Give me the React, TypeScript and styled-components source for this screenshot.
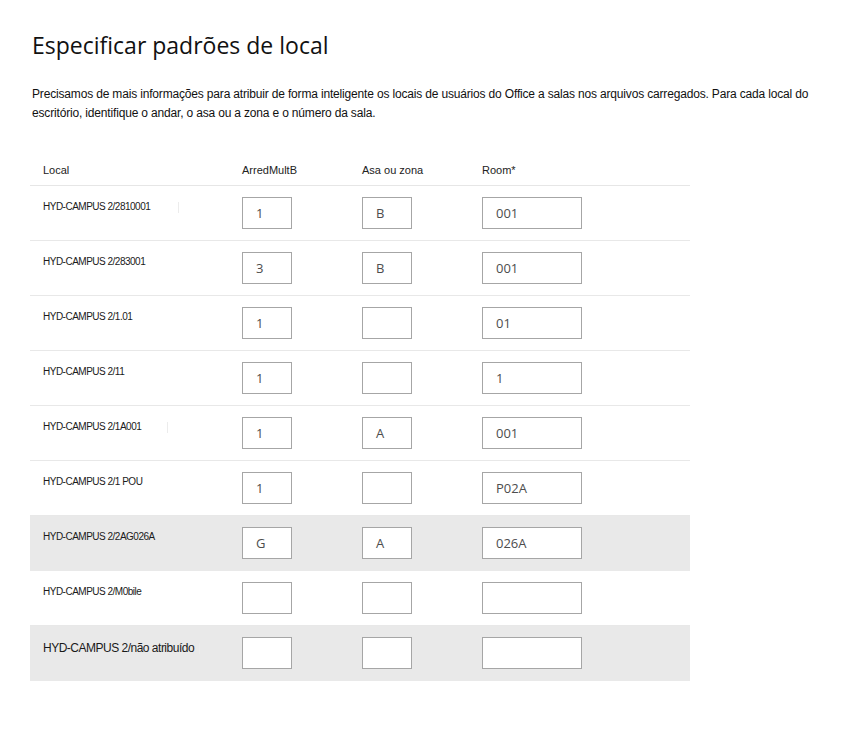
import React from "react";
import styled, { createGlobalStyle } from "styled-components";

const Global = createGlobalStyle`
  html, body { margin: 0; padding: 0; background: #ffffff; }
  body { font-family: "Liberation Sans", Arial, sans-serif; color: #000; }
`;

const Page = styled.main`
  padding: 30px 0 40px 30px;
  width: 815px;
  box-sizing: border-box;
`;

const Title = styled.h1`
  margin: 0 0 0 2px;
  font-family: "Open Sans", "Liberation Sans", sans-serif;
  font-weight: 400;
  font-size: 23px;
  line-height: 30px;
  color: #111;
`;

const Intro = styled.p`
  margin: 25px 0 0 2px;
  font-size: 12px;
  line-height: 19px;
  letter-spacing: -0.17px;
  color: #111;
  white-space: nowrap;
`;

const Table = styled.div`
  margin-top: 32px;
  width: 660px;
  display: flex;
  flex-direction: column;
`;

const Grid = styled.div`
  display: grid;
  grid-template-columns: 212px 120px 120px 1fr;
`;

const HeaderRow = styled(Grid)`
  height: 30px;
  align-items: center;
  border-bottom: 1px solid #e6e6e6;
`;

const HeadCell = styled.div<{ $first?: boolean }>`
  font-size: 11px;
  color: #222;
  padding-left: ${(p) => (p.$first ? "13px" : "0")};
`;

const Row = styled(Grid)<{ $shaded?: boolean }>`
  height: 55px;
  box-sizing: border-box;
  padding-top: 11px;
  align-items: start;
  background: ${(p) => (p.$shaded ? "#e9e9e9" : "#ffffff")};
  border-bottom: 1px solid ${(p) => (p.$shaded ? "#e9e9e9" : "#e8e8e8")};
`;

const Label = styled.div<{ $large?: boolean }>`
  padding-left: 13px;
  display: flex;
  align-items: center;
  white-space: nowrap;
  color: #1a1a1a;
  font-size: ${(p) => (p.$large ? "12px" : "10px")};
  letter-spacing: -0.5px;
  line-height: 14px;
  margin-top: ${(p) => (p.$large ? "4px" : "3px")};
`;

const Caret = styled.span<{ $gap: number }>`
  display: inline-block;
  width: 0;
  height: 11px;
  border-left: 1px solid #ececec;
  margin-left: ${(p) => p.$gap}px;
`;

const Field = styled.div<{ $wide?: boolean }>`
  width: ${(p) => (p.$wide ? "100px" : "50px")};
  height: 32px;
  box-sizing: border-box;
  border: 1px solid #a6a6a6;
  background: #fff;
  padding-left: 13px;
  display: flex;
  align-items: center;
  font-family: "Open Sans", "Liberation Sans", sans-serif;
  font-size: 13px;
  color: #4d4d4d;
`;

type Entry = {
  local: string;
  floor: string;
  wing: string;
  room: string;
  shaded?: boolean;
  large?: boolean;
  caret?: number;
};

const rows: Entry[] = [
  { local: "HYD-CAMPUS 2/2810001", floor: "1", wing: "B", room: "001", caret: 28 },
  { local: "HYD-CAMPUS 2/283001", floor: "3", wing: "B", room: "001" },
  { local: "HYD-CAMPUS 2/1.01", floor: "1", wing: "", room: "01" },
  { local: "HYD-CAMPUS 2/11", floor: "1", wing: "", room: "1" },
  { local: "HYD-CAMPUS 2/1A001", floor: "1", wing: "A", room: "001", caret: 26 },
  { local: "HYD-CAMPUS 2/1 POU", floor: "1", wing: "", room: "P02A" },
  { local: "HYD-CAMPUS 2/2AG026A", floor: "G", wing: "A", room: "026A", shaded: true },
  { local: "HYD-CAMPUS 2/M0bile", floor: "", wing: "", room: "" },
  { local: "HYD-CAMPUS 2/não atribuído", floor: "", wing: "", room: "", shaded: true, large: true, caret: 5 },
];

export default function App() {
  return (
    <>
      <Global />
      <Page>
        <Title>Especificar padrões de local</Title>
        <Intro>
          Precisamos de mais informações para atribuir de forma inteligente os locais de usuários do Office a salas nos arquivos carregados. Para cada local do
          <br />
          escritório, identifique o andar, o asa ou a zona e o número da sala.
        </Intro>
        <Table>
          <HeaderRow>
            <HeadCell $first>Local</HeadCell>
            <HeadCell>ArredMultB</HeadCell>
            <HeadCell>Asa ou zona</HeadCell>
            <HeadCell>Room*</HeadCell>
          </HeaderRow>
          {rows.map((r) => (
            <Row key={r.local} $shaded={r.shaded}>
              <Label $large={r.large}>
                {r.local}
                {r.caret !== undefined && <Caret $gap={r.caret} />}
              </Label>
              <Field>{r.floor}</Field>
              <Field>{r.wing}</Field>
              <Field $wide>{r.room}</Field>
            </Row>
          ))}
        </Table>
      </Page>
    </>
  );
}
